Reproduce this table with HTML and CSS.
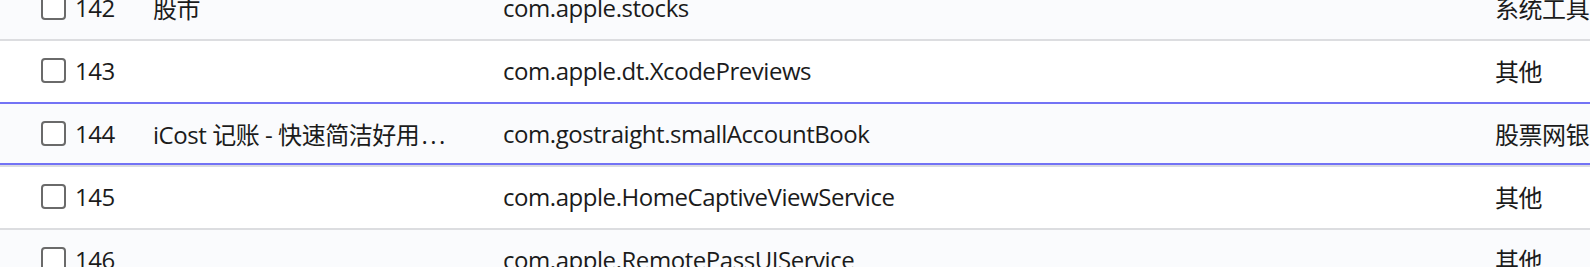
FILE: index.html
```html
<!DOCTYPE html>
<html lang="zh-CN">
<head>
    <meta charset="UTF-8">
    <meta name="viewport" content="width=device-width, initial-scale=1.0">
    <title>应用列表</title>
    <link rel="stylesheet" href="styles.css">
</head>
<body>

    <div class="app-list">
        <div class="row">
            <div class="cell cell-index"><input type="checkbox"><span>142</span></div>
            <div class="cell cell-name">股市</div>
            <div class="cell cell-bundle">com.apple.stocks</div>
            <div class="cell cell-category">系统工具</div>
        </div>
        <div class="row">
            <div class="cell cell-index"><input type="checkbox"><span>143</span></div>
            <div class="cell cell-name"></div>
            <div class="cell cell-bundle">com.apple.dt.XcodePreviews</div>
            <div class="cell cell-category">其他</div>
        </div>
        <div class="row active">
            <div class="cell cell-index"><input type="checkbox"><span>144</span></div>
            <div class="cell cell-name">iCost 记账 - 快速简洁好用<span class="more">...</span></div>
            <div class="cell cell-bundle">com.gostraight.smallAccountBook</div>
            <div class="cell cell-category">股票网银</div>
        </div>
        <div class="row">
            <div class="cell cell-index"><input type="checkbox"><span>145</span></div>
            <div class="cell cell-name"></div>
            <div class="cell cell-bundle">com.apple.HomeCaptiveViewService</div>
            <div class="cell cell-category">其他</div>
        </div>
        <div class="row">
            <div class="cell cell-index"><input type="checkbox"><span>146</span></div>
            <div class="cell cell-name"></div>
            <div class="cell cell-bundle">com.apple.RemotePassUIService</div>
            <div class="cell cell-category">其他</div>
        </div>
    </div>

</body>
</html>
```

FILE: styles.css
```css
body {
    margin: 0;
    overflow: hidden;
    background: #ffffff;
    font-family: "Open Sans", "Noto Sans CJK SC", sans-serif;
    font-size: 24px;
    letter-spacing: -0.45px;
    color: #1b1b1b;
}
/* list is scrolled part way down */
.app-list {
    width: 1800px;
    margin-top: -22px;
}
.row {
    position: relative;
    display: grid;
    grid-template-columns: 153px 350px 992px 1fr;
    align-items: center;
    height: 61px;
    border-bottom: 2px solid #dcdde0;
}
.row:nth-child(odd) {
    background: #fafbfd;
}
.row.active::after {
    content: "";
    position: absolute;
    left: 0;
    right: 0;
    top: -2px;
    bottom: 0;
    border-top: 2px solid #7373f5;
    border-bottom: 2px solid #7373f5;
    pointer-events: none;
}
.cell {
    white-space: nowrap;
    overflow: hidden;
    text-overflow: ellipsis;
    padding-bottom: 2px;
}
.cell-index {
    display: flex;
    align-items: center;
    gap: 9px;
    padding-left: 41px;
}
.cell-index input {
    appearance: none;
    margin: 0;
    width: 25px;
    height: 25px;
    border: 2px solid #6a6a6a;
    border-radius: 4px;
    background: #ffffff;
}
.cell-name .more {
    margin-left: 2px;
    letter-spacing: 2.5px;
}
```
